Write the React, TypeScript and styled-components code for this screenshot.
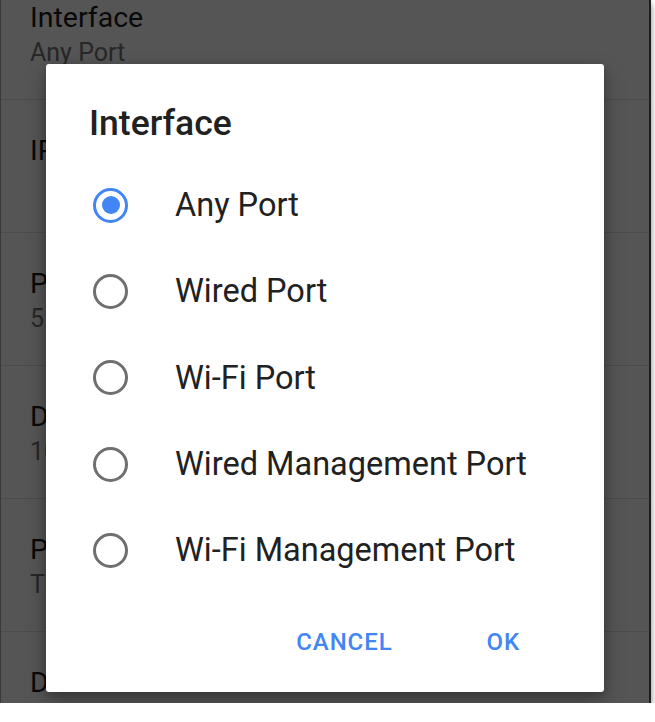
import React, { useState } from "react";
import styled, { createGlobalStyle } from "styled-components";

const GlobalStyle = createGlobalStyle`
  html, body {
    margin: 0;
    padding: 0;
    background: #ffffff;
    font-family: Roboto, "Noto Sans", "Liberation Sans", sans-serif;
  }
`;

const Screen = styled.div`
  position: relative;
  width: 648px;
  height: 703px;
  overflow: hidden;
  background: #ffffff;
  border-left: 1px solid #3a3a3a;
  border-right: 2px solid #1e1e1e;
  box-shadow: 0 4px 7px rgba(0, 0, 0, 0.5);
`;

const SettingsList = styled.div`
  display: flex;
  flex-direction: column;
  margin-top: -33px;
`;

const SettingRow = styled.div`
  height: 133px;
  box-sizing: border-box;
  padding: 34px 0 0 29px;
  border-bottom: 1px solid #e2e2e2;
`;

const SettingTitle = styled.div`
  font-size: 28.5px;
  line-height: 34px;
  color: #1c1c1c;
`;

const SettingValue = styled.div`
  margin-top: 3px;
  font-size: 25px;
  line-height: 30px;
  color: #757575;
`;

const Scrim = styled.div`
  position: absolute;
  inset: 0;
  background: rgba(0, 0, 0, 0.667);
  padding: 64px 0 0 45px;
  box-sizing: border-box;
`;

const Dialog = styled.div`
  width: 558px;
  height: 628px;
  box-sizing: border-box;
  background: #ffffff;
  border-radius: 3px;
  box-shadow: 0 10px 22px rgba(0, 0, 0, 0.28), 0 2px 8px rgba(0, 0, 0, 0.2);
  display: flex;
  flex-direction: column;
  padding-top: 39px;
`;

const DialogTitle = styled.div`
  padding-left: 43px;
  font-size: 35.5px;
  line-height: 40px;
  font-weight: 500;
  color: #212121;
`;

const OptionList = styled.div`
  margin-top: 19px;
  display: flex;
  flex-direction: column;
`;

const OptionRow = styled.label`
  height: 86.3px;
  display: flex;
  align-items: center;
  padding-left: 47px;
  gap: 47px;
  cursor: pointer;
`;

const Radio = styled.span<{ $checked: boolean }>`
  width: 35px;
  height: 35px;
  box-sizing: border-box;
  border-radius: 50%;
  border: 3.5px solid ${(p) => (p.$checked ? "#4285f4" : "#6f6f6f")};
  display: flex;
  align-items: center;
  justify-content: center;
  flex-shrink: 0;

  &::after {
    content: "";
    width: 18px;
    height: 18px;
    border-radius: 50%;
    background: #4285f4;
    display: ${(p) => (p.$checked ? "block" : "none")};
  }
`;

const OptionText = styled.span`
  font-size: 32.5px;
  line-height: 40px;
  color: #212121;
`;

const Actions = styled.div`
  margin-top: 19px;
  height: 60px;
  display: flex;
  align-items: center;
  justify-content: flex-end;
  gap: 94px;
  padding-right: 84px;
`;

const ActionButton = styled.button`
  border: none;
  background: none;
  padding: 0;
  font-family: Roboto, "Noto Sans", "Liberation Sans", sans-serif;
  font-size: 24px;
  font-weight: 500;
  letter-spacing: 0.9px;
  color: #4285f4;
  text-transform: uppercase;
  cursor: pointer;
`;

const settings = [
  { title: "Interface", value: "Any Port" },
  { title: "IP Address", value: "" },
  { title: "Port", value: "514" },
  { title: "Destination", value: "10.0.0.1" },
  { title: "Protocol", value: "TCP" },
  { title: "Disabled", value: "Maximum (Default)" },
];

const options = [
  "Any Port",
  "Wired Port",
  "Wi-Fi Port",
  "Wired Management Port",
  "Wi-Fi Management Port",
];

export default function App() {
  const [selected, setSelected] = useState(0);

  return (
    <>
      <GlobalStyle />
      <Screen>
        <SettingsList>
          {settings.map((s) => (
            <SettingRow key={s.title}>
              <SettingTitle>{s.title}</SettingTitle>
              <SettingValue>{s.value}</SettingValue>
            </SettingRow>
          ))}
        </SettingsList>
        <Scrim>
          <Dialog>
            <DialogTitle>Interface</DialogTitle>
            <OptionList>
              {options.map((o, i) => (
                <OptionRow key={o} onClick={() => setSelected(i)}>
                  <Radio $checked={selected === i} />
                  <OptionText>{o}</OptionText>
                </OptionRow>
              ))}
            </OptionList>
            <Actions>
              <ActionButton>Cancel</ActionButton>
              <ActionButton>OK</ActionButton>
            </Actions>
          </Dialog>
        </Scrim>
      </Screen>
    </>
  );
}
